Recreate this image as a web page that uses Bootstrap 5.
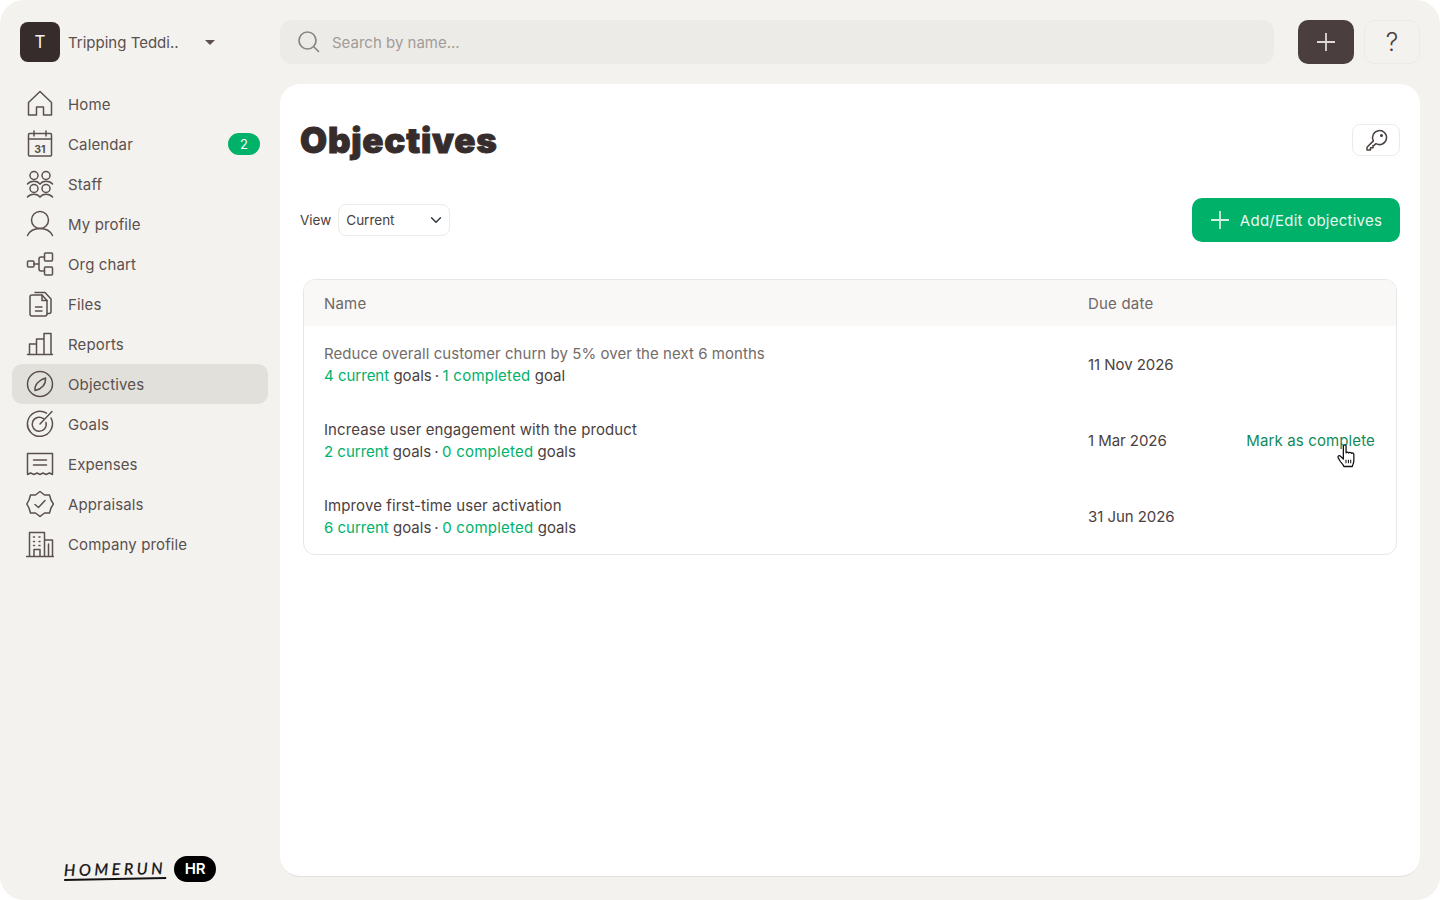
<!DOCTYPE html>
<html lang="en">
<head>
  <meta charset="UTF-8" />
  <meta name="viewport" content="width=device-width, initial-scale=1.0"/>
  <title>Objectives</title>
  <link href="https://cdn.jsdelivr.net/npm/bootstrap@5.3.2/dist/css/bootstrap.min.css" rel="stylesheet" />
  <style>
    html, body { height: 100%; }
    body {
      background-color: #fff;
      color: #4b4140;
      font-family: "Inter", "Liberation Sans", sans-serif;
      font-size: 15px;
      margin: 0;
      overflow: hidden;
    }

    .app-shell {
      width: 1440px;
      height: 900px;
      background-color: #f4f2ef;
      border-radius: 24px;
    }

    .side-col {
      width: 280px;
      flex: none;
      padding: 22px 12px 18px;
    }

    .org-switch { padding-left: 8px; height: 40px; margin-bottom: 22px; }
    .org-mark {
      width: 40px;
      height: 40px;
      padding-top: 2px;
      border-radius: 8px;
      background-color: #362c2b;
      color: #f4f2ef;
      font-size: 17px;
    }
    .org-name { margin-left: 8px; width: 125px; padding-top: 2px; white-space: nowrap; color: #5a504e; }
    .org-caret {
      width: 0;
      height: 0;
      margin-left: 12px;
      border-left: 5px solid transparent;
      border-right: 5px solid transparent;
      border-top: 5px solid #5a504e;
    }

    .side-link {
      height: 40px;
      padding: 0 8px 0 14px;
      gap: 14px;
      border-radius: 10px;
      color: #5a504e;
      letter-spacing: .13px;
    }
    .side-link:hover { color: #5a504e; }
    .side-link.active { background-color: #e2e0db; color: #5a504e; }
    .side-label { padding-top: 2px; }
    .side-icon { width: 28px; height: 28px; flex: none; fill: none; stroke: #5a504e; stroke-width: 1.5; stroke-linejoin: round; stroke-linecap: round; }
    .side-icon text { font-family: "Inter", sans-serif; font-size: 10.5px; font-weight: 700; fill: #5a504e; stroke: none; letter-spacing: 0; }
    .count-pill {
      width: 32px;
      height: 22px;
      border-radius: 11px;
      background-color: #00b16a;
      color: #fff;
      font-size: 13px;
      font-weight: 400;
    }

    .brand-row { padding-left: 52px; gap: 8px; }
    .brand-word {
      font-family: "Lato", sans-serif;
      font-style: italic;
      font-weight: 400;
      font-size: 16px;
      letter-spacing: 3.55px;
      line-height: 19px;
      color: #111;
      -webkit-text-stroke: .3px #111;
      border-bottom: 2px solid #111;
      transform: rotate(-1deg);
    }
    .brand-hr {
      width: 42px;
      height: 26px;
      border-radius: 13px;
      background-color: #000;
      color: #fff;
      font-weight: 600;
      font-size: 15px;
    }

    .main-col { padding: 20px 20px 23px 0; min-width: 0; }
    .top-bar { height: 44px; margin-bottom: 20px; }
    .search-box {
      background-color: #ecebe7;
      border-radius: 12px;
      padding-left: 17px;
      gap: 9px;
      margin-right: 24px;
    }
    .search-box input {
      background: transparent;
      border: 0;
      outline: 0;
      width: 100%;
      padding-top: 3px;
      font-size: 15px;
      color: #4b4140;
    }
    .search-box input::placeholder { color: #a19c98; }
    .search-icon { width: 24px; height: 24px; fill: none; stroke: #8a8581; stroke-width: 1.7; stroke-linecap: round; }

    .btn-create {
      width: 56px;
      height: 44px;
      background-color: #4a3f3e;
      border: 0;
      border-radius: 10px;
      padding: 0;
      margin-right: 10px;
    }
    .btn-help {
      width: 56px;
      height: 44px;
      background-color: transparent;
      border: 1px solid #ecebe7;
      border-radius: 10px;
      padding: 2px 0 0;
      color: #4b4140;
      font-size: 25px;
      font-weight: 300;
    }
    .plus-icon { stroke: #ddd9d6; stroke-width: 1.8; fill: none; width: 20px; height: 20px; }

    .page-card {
      background-color: #fff;
      border: 0;
      border-bottom: 1px solid #e2e0db;
      border-radius: 20px;
      padding: 40px 20px 0;
    }
    .title-row { height: 32px; margin-bottom: 42px; }
    .page-title {
      font-family: "Inter", "Liberation Sans", sans-serif;
      font-weight: 900;
      font-size: 35px;
      line-height: 32px;
      letter-spacing: .75px;
      -webkit-text-stroke: .9px #362c2b;
      color: #362c2b;
      margin: 0;
    }
    .btn-key {
      width: 48px;
      height: 32px;
      padding: 0;
      background-color: #fff;
      border: 1px solid #ecebe7;
      border-radius: 8px;
    }
    .key-icon { width: 24px; height: 24px; fill: none; stroke: #4b4140; stroke-width: 1.5; stroke-linejoin: round; }

    .filter-row { height: 44px; margin-bottom: 37px; }
    .filter-label { font-size: 13.5px; margin-right: 7px; color: #4b4140; }
    .view-select {
      width: 112px;
      height: 32px;
      padding: 0 7px;
      font-size: 13.5px;
      color: #4b4140;
      border: 1px solid #ecebe7;
      border-radius: 8px;
      background-position: right 6px center;
      background-size: 14px 12px;
    }
    .btn-add {
      width: 208px;
      height: 44px;
      padding: 2px 0 0;
      gap: 10px;
      background-color: #00b16a;
      border: 0;
      border-radius: 10px;
      color: #e8f7f0;
      font-size: 15px;
      letter-spacing: .25px;
    }
    .btn-add .plus-icon { stroke: #d3f0e3; width: 20px; height: 20px; margin-top: -2px; }

    .table-frame {
      margin: 0 3px;
      border: 1px solid #e9e7e3;
      border-radius: 12px;
      overflow: hidden;
    }
    .goal-table { margin: 0; table-layout: fixed; }
    .goal-table th {
      height: 46px;
      padding: 2px 20px 0;
      background-color: #f9f8f6;
      color: #6f6765;
      font-weight: 400;
      letter-spacing: .2px;
      border: 0;
      vertical-align: middle;
    }
    .goal-table td {
      height: 76px;
      padding: 2px 20px 0;
      color: #4b4140;
      border: 0;
      vertical-align: middle;
      line-height: 22px;
    }
    .goal-table td.due-cell { letter-spacing: -.05px; }
    .goal-table .goal-name { letter-spacing: .09px; }
    .goal-table tbody tr:first-child .goal-name { color: #736c6a; letter-spacing: .05px; }
    .goal-count { color: #00b16a; }
    .goal-done { letter-spacing: .25px; }
    .goal-sep { margin: 0 3.5px 0 3px; }
    .goal-link { color: #0f8a5c; text-decoration: none; white-space: nowrap; letter-spacing: .13px; }
    .cursor-wrap { position: relative; }
    .goal-table td.cursor-wrap { padding-right: 21px; }
    .hand-cursor { position: absolute; right: 39px; top: 41px; width: 21px; height: 26px; }
  </style>
</head>
<body>
  <div class="app-shell d-flex">
    <!-- sidebar -->
    <aside class="side-col d-flex flex-column">
      <div class="org-switch d-flex align-items-center">
        <div class="org-mark d-flex align-items-center justify-content-center">T</div>
        <div class="org-name">Tripping Teddi..</div>
        <span class="org-caret"></span>
      </div>

      <nav class="nav flex-column">
        <a class="nav-link side-link d-flex align-items-center" href="#">
          <svg class="side-icon" viewBox="0 0 28 28"><path d="M2.500 25V12.500L14 1.500l11.500 11V25h-8v-8h-7v8z"/></svg><span class="side-label">Home</span>
        </a>
        <a class="nav-link side-link d-flex align-items-center" href="#">
          <svg class="side-icon" viewBox="0 0 28 28"><rect x="2.500" y="3.500" width="23" height="22.500" rx="1"/><path d="M2.500 9h23M8 1v5M20 1v5"/><text x="14" y="22.500" text-anchor="middle">31</text></svg><span class="side-label">Calendar</span>
          <span class="count-pill badge d-flex align-items-center justify-content-center ms-auto">2</span>
        </a>
        <a class="nav-link side-link d-flex align-items-center" href="#">
          <svg class="side-icon" viewBox="0 0 28 28"><circle cx="8" cy="5.500" r="4"/><circle cx="20" cy="5.500" r="4"/><circle cx="8" cy="18.500" r="4"/><circle cx="20" cy="18.500" r="4"/><path d="M1.500 14c1.500-2 3.500-2.800 6.500-2.800 2.800 0 4.800 1 6 3 1.200-2 3.200-3 6-3 3 0 5 .8 6.500 2.800M1.500 27c1.500-2 3.500-2.800 6.500-2.800 2.800 0 4.800 1 6 3 1.200-2 3.200-3 6-3 3 0 5 .8 6.500 2.800"/></svg><span class="side-label">Staff</span>
        </a>
        <a class="nav-link side-link d-flex align-items-center" href="#">
          <svg class="side-icon" viewBox="0 0 28 28"><circle cx="14" cy="10" r="8.500"/><path d="M1.500 25.500c2.200-4.800 6.500-7 12.500-7s10.300 2.200 12.500 7"/></svg><span class="side-label">My profile</span>
        </a>
        <a class="nav-link side-link d-flex align-items-center" href="#">
          <svg class="side-icon" viewBox="0 0 28 28"><rect x="1.500" y="11" width="6.500" height="6" rx="1"/><rect x="18.500" y="3" width="8" height="8" rx="1"/><rect x="18.500" y="17" width="8" height="8" rx="1"/><path d="M8 14h5M18.500 7H15a2 2 0 0 0-2 2v10a2 2 0 0 0 2 2h3.500"/></svg><span class="side-label">Org chart</span>
        </a>
        <a class="nav-link side-link d-flex align-items-center" href="#">
          <svg class="side-icon" viewBox="0 0 28 28"><path d="M4 7a2 2 0 0 1 2-2h10l5 5.500V24a2 2 0 0 1-2 2H6a2 2 0 0 1-2-2z"/><path d="M9 2.500h10l6 6.500v12.500a2 2 0 0 1-2 2h-2M16 5v5.500h5M9.500 17h6.500M9.500 21h6.500"/></svg><span class="side-label">Files</span>
        </a>
        <a class="nav-link side-link d-flex align-items-center" href="#">
          <svg class="side-icon" viewBox="0 0 28 28"><path d="M1.500 24.500h25M3.500 24.500V14h7v10.500M10.500 24.500V9h7.500v15.500M18 24.500V3.500h7v21"/></svg><span class="side-label">Reports</span>
        </a>
        <a class="nav-link side-link active d-flex align-items-center" href="#">
          <svg class="side-icon" viewBox="0 0 28 28"><circle cx="14" cy="14" r="12.500"/><path d="M9 20.500c-.8-5.500 3.500-10.500 10.500-12.500.6 6-3.500 11-10.500 12.500z"/></svg><span class="side-label">Objectives</span>
        </a>
        <a class="nav-link side-link d-flex align-items-center" href="#">
          <svg class="side-icon" viewBox="0 0 28 28"><path d="M20.500 3.200A12.500 12.500 0 1 0 25 8"/><path d="M17.500 8.700A7 7 0 1 0 20 12.500"/><path d="M14 14L26 1.500"/></svg><span class="side-label">Goals</span>
        </a>
        <a class="nav-link side-link d-flex align-items-center" href="#">
          <svg class="side-icon" viewBox="0 0 28 28"><path d="M1.500 3.500h25v21l-3-1.500-3.500 1.500-3-1.500-3 1.500-3-1.500-3 1.500-3.500-1.500-3 1.500zM7.500 10h13M7.500 15h13"/></svg><span class="side-label">Expenses</span>
        </a>
        <a class="nav-link side-link d-flex align-items-center" href="#">
          <svg class="side-icon" viewBox="0 0 28 28"><path d="M14 1.500l4.500 3.500h5l1.500 5 2.500 4-2.500 4-1.500 5h-5L14 26.500 9.500 23h-5L3 18 .8 14 3 10l1.500-5h5z"/><path d="M9 14.500l3.500 3 6.500-7"/></svg><span class="side-label">Appraisals</span>
        </a>
        <a class="nav-link side-link d-flex align-items-center" href="#">
          <svg class="side-icon" viewBox="0 0 28 28"><path d="M.5 26.500h27M3.500 26.500V2.500h15v24M18.500 10h8v16.500M8 26.500v-7h6v7M7.500 7h1M13 7h1M7.500 11.500h1M13 11.500h1M7.500 15.500h1M13 15.500h1M22.500 14v12"/></svg><span class="side-label">Company profile</span>
        </a>
      </nav>

      <div class="brand-row d-flex align-items-center mt-auto">
        <span class="brand-word">HOMERUN</span>
        <span class="brand-hr d-flex align-items-center justify-content-center">HR</span>
      </div>
    </aside>

    <!-- main -->
    <main class="main-col flex-grow-1 d-flex flex-column">
      <div class="top-bar d-flex">
        <div class="search-box flex-grow-1 d-flex align-items-center">
          <svg class="search-icon flex-shrink-0" viewBox="0 0 24 24"><circle cx="10.500" cy="10.500" r="8.500"/><path d="M17 17l4.500 4.500"/></svg>
          <input type="text" placeholder="Search by name..." />
        </div>
        <button class="btn btn-create d-flex align-items-center justify-content-center" type="button">
          <svg class="plus-icon" viewBox="0 0 20 20"><path d="M10 1v18M1 10h18"/></svg>
        </button>
        <button class="btn btn-help d-flex align-items-center justify-content-center" type="button">?</button>
      </div>

      <div class="card page-card flex-grow-1">
        <div class="title-row d-flex align-items-center justify-content-between">
          <h1 class="page-title">Objectives</h1>
          <button class="btn btn-key d-flex align-items-center justify-content-center" type="button">
            <svg class="key-icon" viewBox="0 0 24 24"><path d="M9.400 12.900L3 19.300V22h3.500v-2.200H9v-2.300h1l2-1.900A7 7 0 1 0 9.400 12.900z"/><circle cx="17.500" cy="7.500" r=".8" fill="#4b4140"/></svg>
          </button>
        </div>

        <div class="filter-row d-flex align-items-center">
          <label class="filter-label" for="viewFilter">View</label>
          <select class="form-select view-select" id="viewFilter">
            <option>Current</option>
          </select>
          <button class="btn btn-add d-flex align-items-center justify-content-center ms-auto" type="button">
            <svg class="plus-icon" viewBox="0 0 20 20"><path d="M10 1v18M1 10h18"/></svg>
            Add/Edit objectives
          </button>
        </div>

        <div class="table-frame">
          <table class="table goal-table">
            <colgroup><col style="width: 764px"><col style="width: 158px"><col></colgroup>
            <thead>
              <tr><th>Name</th><th>Due date</th><th></th></tr>
            </thead>
            <tbody>
              <tr>
                <td>
                  <div class="goal-name">Reduce overall customer churn by 5% over the next 6 months</div>
                  <div><span class="goal-count">4 current</span> goals<span class="goal-sep">·</span><span class="goal-count goal-done">1 completed</span> goal</div>
                </td>
                <td class="due-cell">11 Nov 2026</td>
                <td></td>
              </tr>
              <tr>
                <td>
                  <div class="goal-name">Increase user engagement with the product</div>
                  <div><span class="goal-count">2 current</span> goals<span class="goal-sep">·</span><span class="goal-count goal-done">0 completed</span> goals</div>
                </td>
                <td class="due-cell">1 Mar 2026</td>
                <td class="cursor-wrap text-end">
                  <a class="goal-link" href="#">Mark as complete</a>
                  <svg class="hand-cursor" viewBox="0 0 20 24"><path d="M7 2.500c0-1.600 2.600-1.600 2.600 0V9c.5-1 2.300-1 2.600.2.500-.9 2.200-.8 2.500.3.700-.7 2.300-.3 2.300 1V16c0 3-1 4-1.500 6H7.500c-.5-2-2.500-3.500-3.500-5L2 13.500c-.6-1.400 1.300-2.400 2.300-1.200L7 15z" fill="#fff" stroke="#111" stroke-width="1.200" stroke-linejoin="round"/><path d="M9.500 15.500v3.500M11.800 15.500v3.500M14 15.500v3.500" stroke="#111" stroke-width="1"/></svg>
                </td>
              </tr>
              <tr>
                <td>
                  <div class="goal-name">Improve first-time user activation</div>
                  <div><span class="goal-count">6 current</span> goals<span class="goal-sep">·</span><span class="goal-count goal-done">0 completed</span> goals</div>
                </td>
                <td class="due-cell">31 Jun 2026</td>
                <td></td>
              </tr>
            </tbody>
          </table>
        </div>
      </div>
    </main>
  </div>

  <script src="https://cdn.jsdelivr.net/npm/bootstrap@5.3.2/dist/js/bootstrap.bundle.min.js"></script>
</body>
</html>
